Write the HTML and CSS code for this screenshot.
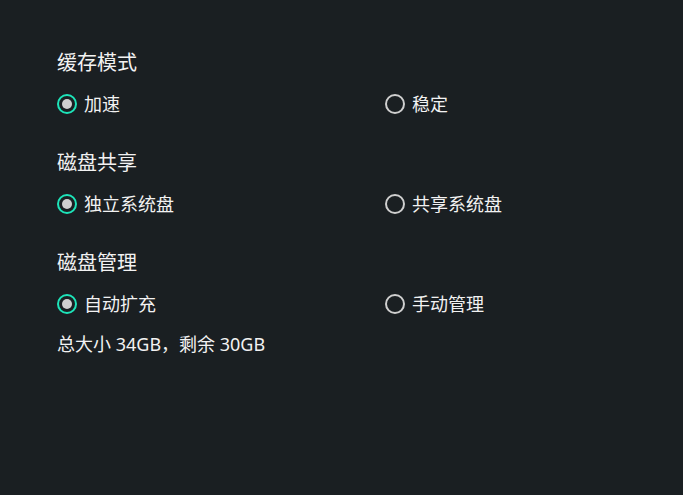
FILE: index.html
```html
<!DOCTYPE html>
<html>

<head>
  <title>磁盘设置</title>
  <link rel="stylesheet" href="styles.css">
</head>

<body>
  <div class="settings">
    <div class="section">
      <div class="section-title">缓存模式</div>
      <div class="options">
        <label class="radio checked"><span class="dot"></span>加速</label>
        <label class="radio"><span class="dot"></span>稳定</label>
      </div>
    </div>

    <div class="section">
      <div class="section-title">磁盘共享</div>
      <div class="options">
        <label class="radio checked"><span class="dot"></span>独立系统盘</label>
        <label class="radio"><span class="dot"></span>共享系统盘</label>
      </div>
    </div>

    <div class="section">
      <div class="section-title">磁盘管理</div>
      <div class="options">
        <label class="radio checked"><span class="dot"></span>自动扩充</label>
        <label class="radio"><span class="dot"></span>手动管理</label>
      </div>
      <div class="disk-info">总大小 34GB，剩余 30GB</div>
    </div>
  </div>
</body>

</html>
```

FILE: styles.css
```css
body {
  margin: 0;
  padding: 0;
  background-color: #1a1f22;
  color: #f2f2f2;
  font-family: "Noto Sans", "Noto Sans CJK SC", sans-serif;
  font-size: 18px;
  height: 100vh;
}

.settings {
  padding: 51px 0 0 57px;
  display: flex;
  flex-direction: column;
  gap: 35px;
}

.section {
  display: flex;
  flex-direction: column;
  gap: 17px;
}

.section-title {
  font-size: 20px;
  line-height: 24px;
}

.options {
  display: grid;
  grid-template-columns: 328px 1fr;
}

.radio {
  display: flex;
  align-items: center;
  gap: 7px;
  line-height: 24px;
}

.radio .dot {
  width: 16px;
  height: 16px;
  border: 2px solid #cfcfcf;
  border-radius: 50%;
  position: relative;
}

.radio.checked .dot {
  border-color: #1de4b9;
}

.radio.checked .dot::after {
  content: "";
  position: absolute;
  top: 3px;
  left: 3px;
  width: 10px;
  height: 10px;
  border-radius: 50%;
  background-color: #cfcfcf;
}

.disk-info {
  margin-top: -1px;
  line-height: 24px;
}
```
